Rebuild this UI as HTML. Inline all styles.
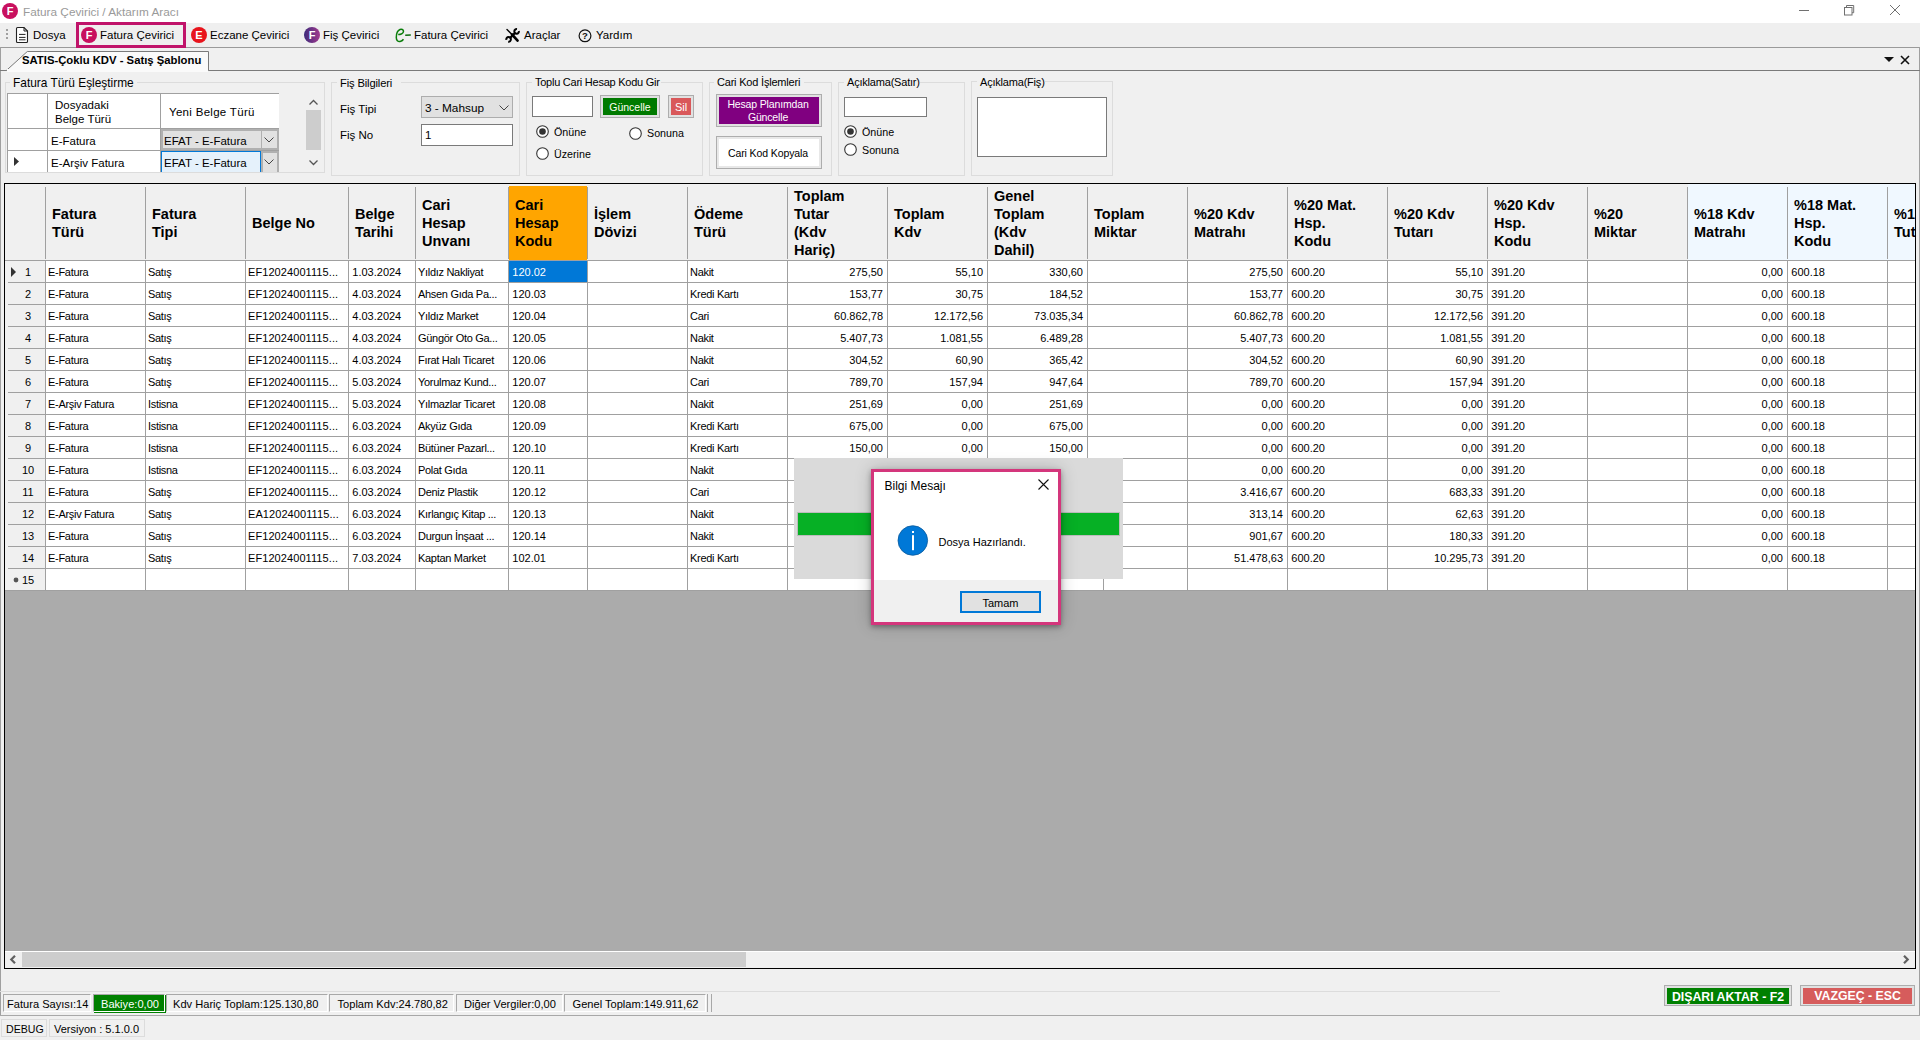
<!DOCTYPE html>
<html><head><meta charset="utf-8"><title>Fatura Çevirici</title>
<style>
html,body{margin:0;padding:0;}
body{width:1920px;height:1040px;overflow:hidden;position:relative;background:#f0f0f0;font-family:"Liberation Sans",sans-serif;}
.t{position:absolute;white-space:nowrap;}
.r{position:absolute;box-sizing:border-box;}
svg{position:absolute;overflow:visible;}
</style></head><body>

<div class="r" style="left:0px;top:0px;width:1920px;height:23px;background:#fff"></div>
<svg style="left:2px;top:3px" width="16" height="16" viewBox="0 0 16 16"><circle cx="8" cy="8" r="8" fill="#c8105f"/><text x="8" y="12.2" text-anchor="middle" font-family="Liberation Sans" font-weight="bold" font-size="11" fill="#fff">F</text></svg>
<div class="t" style="left:23px;top:7.01px;font-size:11.8px;line-height:11.8px;color:#9a9a9a;font-weight:normal;letter-spacing:0px;">Fatura Çevirici / Aktarım Aracı</div>
<div class="r" style="left:1799px;top:10px;width:10px;height:1px;background:#707070"></div>
<svg style="left:1844px;top:5px" width="12" height="12" viewBox="0 0 12 12"><rect x="0.5" y="2.5" width="7.5" height="7.5" fill="none" stroke="#707070"/><path d="M2.5 2.5V0.5H9.7V7.7H8" fill="none" stroke="#707070"/></svg>
<svg style="left:1890px;top:5px" width="10" height="10" viewBox="0 0 10 10"><path d="M0 0L10 10M10 0L0 10" stroke="#707070" stroke-width="1"/></svg>
<div class="r" style="left:0px;top:23px;width:1920px;height:24px;background:#efefef"></div>
<div class="r" style="left:6px;top:29px;width:2px;height:2px;background:#a0a0a0"></div>
<div class="r" style="left:6px;top:33px;width:2px;height:2px;background:#a0a0a0"></div>
<div class="r" style="left:6px;top:37px;width:2px;height:2px;background:#a0a0a0"></div>
<svg style="left:15px;top:26px" width="14" height="18" viewBox="0 0 14 18"><path d="M1.5 2.5Q1.5 1.5 2.5 1.5H9L12.5 5V15.5Q12.5 16.5 11.5 16.5H2.5Q1.5 16.5 1.5 15.5Z" fill="#fff" stroke="#222" stroke-width="1.1"/><path d="M9 1.5V5H12.5" fill="none" stroke="#222" stroke-width="1"/><path d="M4 8.4H10.5M4 11.4H10.5M4 13.8H10.5" stroke="#222" stroke-width="1"/></svg>
<div class="t" style="left:33px;top:30.27px;font-size:11.5px;line-height:11.5px;color:#000;font-weight:normal;letter-spacing:0px;">Dosya</div>
<div class="r" style="left:76px;top:22px;width:110px;height:26px;border:3px solid #c0146a;z-index:2"></div>
<svg style="left:81px;top:27px" width="16" height="16" viewBox="0 0 16 16"><circle cx="8" cy="8" r="8" fill="#c8105f"/><text x="8" y="12.2" text-anchor="middle" font-family="Liberation Sans" font-weight="bold" font-size="11" fill="#fff">F</text></svg>
<div class="t" style="left:100px;top:30.27px;font-size:11.5px;line-height:11.5px;color:#000;font-weight:normal;letter-spacing:0px;">Fatura Çevirici</div>
<svg style="left:191px;top:27px" width="16" height="16" viewBox="0 0 16 16"><circle cx="8" cy="8" r="8" fill="#e8141c"/><text x="8" y="12.2" text-anchor="middle" font-family="Liberation Sans" font-weight="bold" font-size="11" fill="#fff">E</text></svg>
<div class="t" style="left:210px;top:30.27px;font-size:11.5px;line-height:11.5px;color:#000;font-weight:normal;letter-spacing:0px;">Eczane Çevirici</div>
<svg style="left:304px;top:27px" width="16" height="16" viewBox="0 0 16 16"><defs><linearGradient id="gp" x1="0" y1="0" x2="1" y2="0"><stop offset="0" stop-color="#3c2a7a"/><stop offset="1" stop-color="#a33a8e"/></linearGradient></defs><circle cx="8" cy="8" r="8" fill="url(#gp)"/><text x="8" y="12.2" text-anchor="middle" font-family="Liberation Sans" font-weight="bold" font-size="11" fill="#fff">F</text></svg>
<div class="t" style="left:323px;top:30.27px;font-size:11.5px;line-height:11.5px;color:#000;font-weight:normal;letter-spacing:0px;">Fiş Çevirici</div>
<svg style="left:390px;top:24px" width="24" height="22" viewBox="0 0 24 22"><path d="M8.2 10.5C10.5 10.5 13.5 9.5 13.5 7.3C13.5 5.5 11.5 5 10 5.5C7.5 6.5 6.3 10 6.3 13.5C6.3 16.5 8 17.8 10 17.5C11.5 17.3 12.8 16.3 13.5 15.3" fill="none" stroke="#0a7d0a" stroke-width="1.5"/><path d="M15.2 11.3L20.8 11" stroke="#0a6a0a" stroke-width="1.5"/></svg>
<div class="t" style="left:414px;top:30.27px;font-size:11.5px;line-height:11.5px;color:#000;font-weight:normal;letter-spacing:0px;">Fatura Çevirici</div>
<svg style="left:505px;top:28px" width="15" height="15" viewBox="0 0 15 15"><path d="M2 1.5L7 6.5" stroke="#000" stroke-width="1.4" stroke-linecap="round"/><path d="M7 6.5L12.6 12.6" stroke="#000" stroke-width="2.6" stroke-linecap="round"/><path d="M4.8 10.2L10.2 4.8" stroke="#000" stroke-width="2.3"/><path d="M13.87 3.0A2.3 2.3 0 1 1 12.0 1.13" fill="none" stroke="#000" stroke-width="2"/><path d="M1.33 11.8A2.3 2.3 0 1 1 3.2 13.67" fill="none" stroke="#000" stroke-width="2"/></svg>
<div class="t" style="left:524px;top:30.27px;font-size:11.5px;line-height:11.5px;color:#000;font-weight:normal;letter-spacing:0px;">Araçlar</div>
<svg style="left:578px;top:29px" width="14" height="14" viewBox="0 0 14 14"><circle cx="7" cy="6.8" r="5.9" fill="none" stroke="#111" stroke-width="1.2"/><text x="7" y="10.3" text-anchor="middle" font-family="Liberation Sans" font-weight="bold" font-size="9.5" fill="#111">?</text></svg>
<div class="t" style="left:596px;top:30.27px;font-size:11.5px;line-height:11.5px;color:#000;font-weight:normal;letter-spacing:0px;">Yardım</div>
<div class="r" style="left:0px;top:47px;width:1920px;height:1px;background:#9a9a9a"></div>
<div class="r" style="left:0px;top:47px;width:1px;height:969px;background:#a0a0a0"></div>
<div class="r" style="left:1919px;top:47px;width:1px;height:969px;background:#a0a0a0"></div>
<div class="r" style="left:0px;top:70px;width:1920px;height:1px;background:#7a7a7a"></div>
<svg style="left:0px;top:48px" width="215" height="24" viewBox="0 0 215 24"><path d="M6.3 22.5L27.3 3.5H208.5V22.5" fill="#fafafa" stroke="#7a7a7a" stroke-width="1"/><rect x="7" y="21" width="201" height="3" fill="#fafafa"/></svg>
<div class="t" style="left:22px;top:55.43px;font-size:11.3px;line-height:11.3px;color:#000;font-weight:bold;letter-spacing:0px;">SATIS-Çoklu KDV - Satış Şablonu</div>
<svg style="left:1884px;top:57px" width="10" height="6" viewBox="0 0 10 6"><path d="M0 0H10L5 5Z" fill="#111"/></svg>
<svg style="left:1900px;top:55px" width="10" height="10" viewBox="0 0 10 10"><path d="M1 1L9 9M9 1L1 9" stroke="#111" stroke-width="1.6"/></svg>
<div class="r" style="left:5px;top:82px;width:320px;height:91px;border:1px solid #dcdcdc"></div>
<div class="r" style="left:10px;top:81px;width:127px;height:3px;background:#f0f0f0"></div>
<div class="t" style="left:13px;top:77.93px;font-size:11.9px;line-height:11.9px;color:#000;font-weight:normal;letter-spacing:0px;">Fatura Türü Eşleştirme</div>
<div class="r" style="left:7px;top:93px;width:272px;height:79px;background:#fff;border-top:1px solid #a0a0a0;border-left:1px solid #a0a0a0"></div>
<div class="r" style="left:47px;top:94px;width:1px;height:78px;background:#a0a0a0"></div>
<div class="r" style="left:160px;top:94px;width:1px;height:78px;background:#a0a0a0"></div>
<div class="r" style="left:8px;top:128px;width:271px;height:1px;background:#a0a0a0"></div>
<div class="r" style="left:8px;top:150px;width:271px;height:1px;background:#a0a0a0"></div>
<div class="t" style="left:55px;top:100.27px;font-size:11.5px;line-height:11.5px;color:#000;font-weight:normal;letter-spacing:0px;">Dosyadaki</div>
<div class="t" style="left:55px;top:114.27px;font-size:11.5px;line-height:11.5px;color:#000;font-weight:normal;letter-spacing:0px;">Belge Türü</div>
<div class="t" style="left:169px;top:107.27px;font-size:11.5px;line-height:11.5px;color:#000;font-weight:normal;letter-spacing:0.3px;">Yeni Belge Türü</div>
<div class="t" style="left:51px;top:136.27px;font-size:11.5px;line-height:11.5px;color:#000;font-weight:normal;letter-spacing:0px;">E-Fatura</div>
<div class="t" style="left:51px;top:158.27px;font-size:11.5px;line-height:11.5px;color:#000;font-weight:normal;letter-spacing:0px;">E-Arşiv Fatura</div>
<div class="r" style="left:161px;top:129px;width:118px;height:21px;background:#e1e1e1;border:2px solid #b0b0b0"></div>
<div class="r" style="left:261px;top:131px;width:1px;height:17px;background:#b0b0b0"></div>
<div class="t" style="left:164px;top:136.27px;font-size:11.5px;line-height:11.5px;color:#000;font-weight:normal;letter-spacing:0px;">EFAT - E-Fatura</div>
<svg style="left:264px;top:137px" width="10" height="6" viewBox="0 0 10 6"><path d="M0.5 0.5L5 5L9.5 0.5" fill="none" stroke="#444" stroke-width="1"/></svg>
<div class="r" style="left:161px;top:151px;width:100px;height:21px;background:#e5f1fb;border:1px solid #0078d7;border-bottom:none"></div>
<div class="r" style="left:261px;top:151px;width:18px;height:21px;background:#e1e1e1;border:2px solid #b0b0b0;border-bottom:none"></div>
<div class="t" style="left:164px;top:158.27px;font-size:11.5px;line-height:11.5px;color:#000;font-weight:normal;letter-spacing:0px;">EFAT - E-Fatura</div>
<svg style="left:264px;top:159px" width="10" height="6" viewBox="0 0 10 6"><path d="M0.5 0.5L5 5L9.5 0.5" fill="none" stroke="#444" stroke-width="1"/></svg>
<svg style="left:14px;top:157px" width="6" height="9" viewBox="0 0 6 9"><path d="M0 0L5 4.5L0 9Z" fill="#333"/></svg>
<div class="r" style="left:306px;top:94px;width:15px;height:78px;background:#f0f0f0"></div>
<div class="r" style="left:306px;top:110px;width:15px;height:40px;background:#cdcdcd"></div>
<svg style="left:309px;top:100px" width="9" height="5" viewBox="0 0 9 5"><path d="M0.5 4.5L4.5 0.5L8.5 4.5" fill="none" stroke="#555" stroke-width="1.3"/></svg>
<svg style="left:309px;top:160px" width="9" height="5" viewBox="0 0 9 5"><path d="M0.5 0.5L4.5 4.5L8.5 0.5" fill="none" stroke="#555" stroke-width="1.3"/></svg>
<div class="r" style="left:331px;top:82px;width:189px;height:94px;border:1px solid #dcdcdc"></div>
<div class="r" style="left:337px;top:81px;width:64px;height:3px;background:#f0f0f0"></div>
<div class="t" style="left:340px;top:77.52px;font-size:11.2px;line-height:11.2px;color:#000;font-weight:normal;letter-spacing:-0.15px;">Fiş Bilgileri</div>
<div class="t" style="left:340px;top:104.27px;font-size:11.5px;line-height:11.5px;color:#000;font-weight:normal;letter-spacing:0px;">Fiş Tipi</div>
<div class="t" style="left:340px;top:130.27px;font-size:11.5px;line-height:11.5px;color:#000;font-weight:normal;letter-spacing:0px;">Fiş No</div>
<div class="r" style="left:421px;top:96px;width:92px;height:22px;background:#e1e1e1;border:1px solid #adadad"></div>
<div class="t" style="left:425px;top:103.01px;font-size:11.8px;line-height:11.8px;color:#000;font-weight:normal;letter-spacing:0px;">3 - Mahsup</div>
<svg style="left:499px;top:105px" width="10" height="6" viewBox="0 0 10 6"><path d="M0.5 0.5L5 5L9.5 0.5" fill="none" stroke="#444" stroke-width="1"/></svg>
<div class="r" style="left:421px;top:124px;width:92px;height:22px;background:#fff;border:1px solid #7a7a7a"></div>
<div class="t" style="left:425px;top:130.27px;font-size:11.5px;line-height:11.5px;color:#000;font-weight:normal;letter-spacing:0px;">1</div>
<div class="r" style="left:526px;top:82px;width:177px;height:94px;border:1px solid #dcdcdc"></div>
<div class="r" style="left:532px;top:81px;width:129px;height:3px;background:#f0f0f0"></div>
<div class="t" style="left:535px;top:76.69px;font-size:11px;line-height:11px;color:#000;font-weight:normal;letter-spacing:-0.25px;">Toplu Cari Hesap Kodu Gir</div>
<div class="r" style="left:532px;top:96px;width:61px;height:21px;background:#fff;border:1px solid #7a7a7a"></div>
<div class="r" style="left:600px;top:95px;width:60px;height:23px;background:#e1e1e1;border:1px solid #adadad"></div>
<div class="r" style="left:603px;top:98px;width:54px;height:17px;background:#007a00"></div>
<div class="t" style="left:330px;width:600px;text-align:center;top:102.11px;font-size:10.5px;line-height:10.5px;color:#fffff4;font-weight:normal;letter-spacing:0px;">Güncelle</div>
<div class="r" style="left:668px;top:95px;width:26px;height:23px;background:#e1e1e1;border:1px solid #adadad"></div>
<div class="r" style="left:671px;top:98px;width:20px;height:17px;background:#d9585a"></div>
<div class="t" style="left:381px;width:600px;text-align:center;top:101.69px;font-size:11px;line-height:11px;color:#fff;font-weight:normal;letter-spacing:0px;">Sil</div>
<svg style="left:536px;top:125px" width="13" height="13" viewBox="0 0 13 13"><circle cx="6.5" cy="6.5" r="5.8" fill="#fff" stroke="#333" stroke-width="1.1"/><circle cx="6.5" cy="6.5" r="3.3" fill="#333"/></svg>
<div class="t" style="left:554px;top:126.94px;font-size:10.7px;line-height:10.7px;color:#000;font-weight:normal;letter-spacing:0px;">Önüne</div>
<svg style="left:629px;top:127px" width="13" height="13" viewBox="0 0 13 13"><circle cx="6.5" cy="6.5" r="5.8" fill="#fff" stroke="#333" stroke-width="1.1"/></svg>
<div class="t" style="left:647px;top:127.94px;font-size:10.7px;line-height:10.7px;color:#000;font-weight:normal;letter-spacing:0px;">Sonuna</div>
<svg style="left:536px;top:147px" width="13" height="13" viewBox="0 0 13 13"><circle cx="6.5" cy="6.5" r="5.8" fill="#fff" stroke="#333" stroke-width="1.1"/></svg>
<div class="t" style="left:554px;top:148.94px;font-size:10.7px;line-height:10.7px;color:#000;font-weight:normal;letter-spacing:0px;">Üzerine</div>
<div class="r" style="left:709px;top:82px;width:123px;height:94px;border:1px solid #dcdcdc"></div>
<div class="r" style="left:714px;top:81px;width:90px;height:3px;background:#f0f0f0"></div>
<div class="t" style="left:717px;top:76.69px;font-size:11px;line-height:11px;color:#000;font-weight:normal;letter-spacing:-0.2px;">Cari Kod İşlemleri</div>
<div class="r" style="left:716px;top:94px;width:106px;height:33px;background:#e1e1e1;border:1px solid #adadad"></div>
<div class="r" style="left:719px;top:97px;width:100px;height:27px;background:#800080"></div>
<div class="t" style="left:468px;width:600px;text-align:center;top:99.11px;font-size:10.5px;line-height:10.5px;color:#fff;font-weight:normal;letter-spacing:-0.15px;">Hesap Planımdan</div>
<div class="t" style="left:468px;width:600px;text-align:center;top:112.11px;font-size:10.5px;line-height:10.5px;color:#fff;font-weight:normal;letter-spacing:-0.15px;">Güncelle</div>
<div class="r" style="left:716px;top:136px;width:106px;height:33px;background:#fff;border:1px solid #adadad"></div>
<div class="r" style="left:717px;top:137px;width:104px;height:31px;border:2px solid #e8e8e8"></div>
<div class="t" style="left:468px;width:600px;text-align:center;top:148.11px;font-size:10.5px;line-height:10.5px;color:#000;font-weight:normal;letter-spacing:-0.1px;">Cari Kod Kopyala</div>
<div class="r" style="left:838px;top:82px;width:127px;height:94px;border:1px solid #dcdcdc"></div>
<div class="r" style="left:844px;top:81px;width:76px;height:3px;background:#f0f0f0"></div>
<div class="t" style="left:847px;top:76.69px;font-size:11px;line-height:11px;color:#000;font-weight:normal;letter-spacing:-0.2px;">Açıklama(Satır)</div>
<div class="r" style="left:844px;top:97px;width:83px;height:20px;background:#fff;border:1px solid #7a7a7a"></div>
<svg style="left:844px;top:125px" width="13" height="13" viewBox="0 0 13 13"><circle cx="6.5" cy="6.5" r="5.8" fill="#fff" stroke="#333" stroke-width="1.1"/><circle cx="6.5" cy="6.5" r="3.3" fill="#333"/></svg>
<div class="t" style="left:862px;top:126.94px;font-size:10.7px;line-height:10.7px;color:#000;font-weight:normal;letter-spacing:0px;">Önüne</div>
<svg style="left:844px;top:143px" width="13" height="13" viewBox="0 0 13 13"><circle cx="6.5" cy="6.5" r="5.8" fill="#fff" stroke="#333" stroke-width="1.1"/></svg>
<div class="t" style="left:862px;top:144.94px;font-size:10.7px;line-height:10.7px;color:#000;font-weight:normal;letter-spacing:0px;">Sonuna</div>
<div class="r" style="left:971px;top:81px;width:142px;height:95px;border:1px solid #dcdcdc"></div>
<div class="r" style="left:977px;top:80px;width:68px;height:3px;background:#f0f0f0"></div>
<div class="t" style="left:980px;top:76.69px;font-size:11px;line-height:11px;color:#000;font-weight:normal;letter-spacing:-0.2px;">Açıklama(Fiş)</div>
<div class="r" style="left:977px;top:97px;width:130px;height:60px;background:#fff;border:1px solid #7a7a7a"></div>
<div class="r" style="left:4px;top:183px;width:1912px;height:786px;border:1px solid #000;background:#ababab"></div>
<div class="r" style="left:5px;top:184px;width:1910px;height:76px;background:#f0f0f0"></div>
<div class="r" style="left:1688px;top:184px;width:227px;height:76px;background:#f0f8ff"></div>
<div class="r" style="left:509px;top:186px;width:78px;height:74px;background:#ffa500"></div>
<div class="r" style="left:45px;top:261px;width:1870px;height:329px;background:#fff"></div>
<div class="r" style="left:5px;top:261px;width:40px;height:329px;background:#f0f0f0"></div>
<div class="r" style="left:5px;top:260px;width:1910px;height:1px;background:#a0a0a0"></div>
<div class="r" style="left:45px;top:187px;width:1px;height:72px;background:#a0a0a0"></div>
<div class="r" style="left:45px;top:261px;width:1px;height:329px;background:#a0a0a0"></div>
<div class="r" style="left:145px;top:187px;width:1px;height:72px;background:#a0a0a0"></div>
<div class="r" style="left:145px;top:261px;width:1px;height:329px;background:#a0a0a0"></div>
<div class="r" style="left:245px;top:187px;width:1px;height:72px;background:#a0a0a0"></div>
<div class="r" style="left:245px;top:261px;width:1px;height:329px;background:#a0a0a0"></div>
<div class="r" style="left:348px;top:187px;width:1px;height:72px;background:#a0a0a0"></div>
<div class="r" style="left:348px;top:261px;width:1px;height:329px;background:#a0a0a0"></div>
<div class="r" style="left:415px;top:187px;width:1px;height:72px;background:#a0a0a0"></div>
<div class="r" style="left:415px;top:261px;width:1px;height:329px;background:#a0a0a0"></div>
<div class="r" style="left:508px;top:187px;width:1px;height:72px;background:#a0a0a0"></div>
<div class="r" style="left:508px;top:261px;width:1px;height:329px;background:#a0a0a0"></div>
<div class="r" style="left:587px;top:187px;width:1px;height:72px;background:#a0a0a0"></div>
<div class="r" style="left:587px;top:261px;width:1px;height:329px;background:#a0a0a0"></div>
<div class="r" style="left:687px;top:187px;width:1px;height:72px;background:#a0a0a0"></div>
<div class="r" style="left:687px;top:261px;width:1px;height:329px;background:#a0a0a0"></div>
<div class="r" style="left:787px;top:187px;width:1px;height:72px;background:#a0a0a0"></div>
<div class="r" style="left:787px;top:261px;width:1px;height:329px;background:#a0a0a0"></div>
<div class="r" style="left:887px;top:187px;width:1px;height:72px;background:#a0a0a0"></div>
<div class="r" style="left:887px;top:261px;width:1px;height:329px;background:#a0a0a0"></div>
<div class="r" style="left:987px;top:187px;width:1px;height:72px;background:#a0a0a0"></div>
<div class="r" style="left:987px;top:261px;width:1px;height:329px;background:#a0a0a0"></div>
<div class="r" style="left:1087px;top:187px;width:1px;height:72px;background:#a0a0a0"></div>
<div class="r" style="left:1087px;top:261px;width:1px;height:329px;background:#a0a0a0"></div>
<div class="r" style="left:1187px;top:187px;width:1px;height:72px;background:#a0a0a0"></div>
<div class="r" style="left:1187px;top:261px;width:1px;height:329px;background:#a0a0a0"></div>
<div class="r" style="left:1287px;top:187px;width:1px;height:72px;background:#a0a0a0"></div>
<div class="r" style="left:1287px;top:261px;width:1px;height:329px;background:#a0a0a0"></div>
<div class="r" style="left:1387px;top:187px;width:1px;height:72px;background:#a0a0a0"></div>
<div class="r" style="left:1387px;top:261px;width:1px;height:329px;background:#a0a0a0"></div>
<div class="r" style="left:1487px;top:187px;width:1px;height:72px;background:#a0a0a0"></div>
<div class="r" style="left:1487px;top:261px;width:1px;height:329px;background:#a0a0a0"></div>
<div class="r" style="left:1587px;top:187px;width:1px;height:72px;background:#a0a0a0"></div>
<div class="r" style="left:1587px;top:261px;width:1px;height:329px;background:#a0a0a0"></div>
<div class="r" style="left:1687px;top:187px;width:1px;height:72px;background:#a0a0a0"></div>
<div class="r" style="left:1687px;top:261px;width:1px;height:329px;background:#a0a0a0"></div>
<div class="r" style="left:1787px;top:187px;width:1px;height:72px;background:#a0a0a0"></div>
<div class="r" style="left:1787px;top:261px;width:1px;height:329px;background:#a0a0a0"></div>
<div class="r" style="left:1887px;top:187px;width:1px;height:72px;background:#a0a0a0"></div>
<div class="r" style="left:1887px;top:261px;width:1px;height:329px;background:#a0a0a0"></div>
<div class="r" style="left:45px;top:282px;width:1870px;height:1px;background:#a0a0a0"></div>
<div class="r" style="left:8px;top:282px;width:37px;height:1px;background:#a0a0a0"></div>
<div class="r" style="left:45px;top:304px;width:1870px;height:1px;background:#a0a0a0"></div>
<div class="r" style="left:8px;top:304px;width:37px;height:1px;background:#a0a0a0"></div>
<div class="r" style="left:45px;top:326px;width:1870px;height:1px;background:#a0a0a0"></div>
<div class="r" style="left:8px;top:326px;width:37px;height:1px;background:#a0a0a0"></div>
<div class="r" style="left:45px;top:348px;width:1870px;height:1px;background:#a0a0a0"></div>
<div class="r" style="left:8px;top:348px;width:37px;height:1px;background:#a0a0a0"></div>
<div class="r" style="left:45px;top:370px;width:1870px;height:1px;background:#a0a0a0"></div>
<div class="r" style="left:8px;top:370px;width:37px;height:1px;background:#a0a0a0"></div>
<div class="r" style="left:45px;top:392px;width:1870px;height:1px;background:#a0a0a0"></div>
<div class="r" style="left:8px;top:392px;width:37px;height:1px;background:#a0a0a0"></div>
<div class="r" style="left:45px;top:414px;width:1870px;height:1px;background:#a0a0a0"></div>
<div class="r" style="left:8px;top:414px;width:37px;height:1px;background:#a0a0a0"></div>
<div class="r" style="left:45px;top:436px;width:1870px;height:1px;background:#a0a0a0"></div>
<div class="r" style="left:8px;top:436px;width:37px;height:1px;background:#a0a0a0"></div>
<div class="r" style="left:45px;top:458px;width:1870px;height:1px;background:#a0a0a0"></div>
<div class="r" style="left:8px;top:458px;width:37px;height:1px;background:#a0a0a0"></div>
<div class="r" style="left:45px;top:480px;width:1870px;height:1px;background:#a0a0a0"></div>
<div class="r" style="left:8px;top:480px;width:37px;height:1px;background:#a0a0a0"></div>
<div class="r" style="left:45px;top:502px;width:1870px;height:1px;background:#a0a0a0"></div>
<div class="r" style="left:8px;top:502px;width:37px;height:1px;background:#a0a0a0"></div>
<div class="r" style="left:45px;top:524px;width:1870px;height:1px;background:#a0a0a0"></div>
<div class="r" style="left:8px;top:524px;width:37px;height:1px;background:#a0a0a0"></div>
<div class="r" style="left:45px;top:546px;width:1870px;height:1px;background:#a0a0a0"></div>
<div class="r" style="left:8px;top:546px;width:37px;height:1px;background:#a0a0a0"></div>
<div class="r" style="left:45px;top:568px;width:1870px;height:1px;background:#a0a0a0"></div>
<div class="r" style="left:8px;top:568px;width:37px;height:1px;background:#a0a0a0"></div>
<div class="r" style="left:45px;top:590px;width:1870px;height:1px;background:#a0a0a0"></div>
<div class="r" style="left:8px;top:590px;width:37px;height:1px;background:#a0a0a0"></div>
<div style="position:absolute;left:5px;top:184px;width:1910px;height:76px;overflow:hidden">
<div class="t" style="left:47px;top:22.73px;font-size:14.5px;line-height:14.5px;color:#000;font-weight:bold;letter-spacing:0px;">Fatura</div>
<div class="t" style="left:47px;top:40.73px;font-size:14.5px;line-height:14.5px;color:#000;font-weight:bold;letter-spacing:0px;">Türü</div>
<div class="t" style="left:147px;top:22.73px;font-size:14.5px;line-height:14.5px;color:#000;font-weight:bold;letter-spacing:0px;">Fatura</div>
<div class="t" style="left:147px;top:40.73px;font-size:14.5px;line-height:14.5px;color:#000;font-weight:bold;letter-spacing:0px;">Tipi</div>
<div class="t" style="left:247px;top:31.73px;font-size:14.5px;line-height:14.5px;color:#000;font-weight:bold;letter-spacing:0px;">Belge No</div>
<div class="t" style="left:350px;top:22.73px;font-size:14.5px;line-height:14.5px;color:#000;font-weight:bold;letter-spacing:0px;">Belge</div>
<div class="t" style="left:350px;top:40.73px;font-size:14.5px;line-height:14.5px;color:#000;font-weight:bold;letter-spacing:0px;">Tarihi</div>
<div class="t" style="left:417px;top:13.73px;font-size:14.5px;line-height:14.5px;color:#000;font-weight:bold;letter-spacing:0px;">Cari</div>
<div class="t" style="left:417px;top:31.73px;font-size:14.5px;line-height:14.5px;color:#000;font-weight:bold;letter-spacing:0px;">Hesap</div>
<div class="t" style="left:417px;top:49.73px;font-size:14.5px;line-height:14.5px;color:#000;font-weight:bold;letter-spacing:0px;">Unvanı</div>
<div class="t" style="left:510px;top:13.73px;font-size:14.5px;line-height:14.5px;color:#000;font-weight:bold;letter-spacing:0px;">Cari</div>
<div class="t" style="left:510px;top:31.73px;font-size:14.5px;line-height:14.5px;color:#000;font-weight:bold;letter-spacing:0px;">Hesap</div>
<div class="t" style="left:510px;top:49.73px;font-size:14.5px;line-height:14.5px;color:#000;font-weight:bold;letter-spacing:0px;">Kodu</div>
<div class="t" style="left:589px;top:22.73px;font-size:14.5px;line-height:14.5px;color:#000;font-weight:bold;letter-spacing:0px;">İşlem</div>
<div class="t" style="left:589px;top:40.73px;font-size:14.5px;line-height:14.5px;color:#000;font-weight:bold;letter-spacing:0px;">Dövizi</div>
<div class="t" style="left:689px;top:22.73px;font-size:14.5px;line-height:14.5px;color:#000;font-weight:bold;letter-spacing:0px;">Ödeme</div>
<div class="t" style="left:689px;top:40.73px;font-size:14.5px;line-height:14.5px;color:#000;font-weight:bold;letter-spacing:0px;">Türü</div>
<div class="t" style="left:789px;top:4.73px;font-size:14.5px;line-height:14.5px;color:#000;font-weight:bold;letter-spacing:0px;">Toplam</div>
<div class="t" style="left:789px;top:22.73px;font-size:14.5px;line-height:14.5px;color:#000;font-weight:bold;letter-spacing:0px;">Tutar</div>
<div class="t" style="left:789px;top:40.73px;font-size:14.5px;line-height:14.5px;color:#000;font-weight:bold;letter-spacing:0px;">(Kdv</div>
<div class="t" style="left:789px;top:58.73px;font-size:14.5px;line-height:14.5px;color:#000;font-weight:bold;letter-spacing:0px;">Hariç)</div>
<div class="t" style="left:889px;top:22.73px;font-size:14.5px;line-height:14.5px;color:#000;font-weight:bold;letter-spacing:0px;">Toplam</div>
<div class="t" style="left:889px;top:40.73px;font-size:14.5px;line-height:14.5px;color:#000;font-weight:bold;letter-spacing:0px;">Kdv</div>
<div class="t" style="left:989px;top:4.73px;font-size:14.5px;line-height:14.5px;color:#000;font-weight:bold;letter-spacing:0px;">Genel</div>
<div class="t" style="left:989px;top:22.73px;font-size:14.5px;line-height:14.5px;color:#000;font-weight:bold;letter-spacing:0px;">Toplam</div>
<div class="t" style="left:989px;top:40.73px;font-size:14.5px;line-height:14.5px;color:#000;font-weight:bold;letter-spacing:0px;">(Kdv</div>
<div class="t" style="left:989px;top:58.73px;font-size:14.5px;line-height:14.5px;color:#000;font-weight:bold;letter-spacing:0px;">Dahil)</div>
<div class="t" style="left:1089px;top:22.73px;font-size:14.5px;line-height:14.5px;color:#000;font-weight:bold;letter-spacing:0px;">Toplam</div>
<div class="t" style="left:1089px;top:40.73px;font-size:14.5px;line-height:14.5px;color:#000;font-weight:bold;letter-spacing:0px;">Miktar</div>
<div class="t" style="left:1189px;top:22.73px;font-size:14.5px;line-height:14.5px;color:#000;font-weight:bold;letter-spacing:0px;">%20 Kdv</div>
<div class="t" style="left:1189px;top:40.73px;font-size:14.5px;line-height:14.5px;color:#000;font-weight:bold;letter-spacing:0px;">Matrahı</div>
<div class="t" style="left:1289px;top:13.73px;font-size:14.5px;line-height:14.5px;color:#000;font-weight:bold;letter-spacing:0px;">%20 Mat.</div>
<div class="t" style="left:1289px;top:31.73px;font-size:14.5px;line-height:14.5px;color:#000;font-weight:bold;letter-spacing:0px;">Hsp.</div>
<div class="t" style="left:1289px;top:49.73px;font-size:14.5px;line-height:14.5px;color:#000;font-weight:bold;letter-spacing:0px;">Kodu</div>
<div class="t" style="left:1389px;top:22.73px;font-size:14.5px;line-height:14.5px;color:#000;font-weight:bold;letter-spacing:0px;">%20 Kdv</div>
<div class="t" style="left:1389px;top:40.73px;font-size:14.5px;line-height:14.5px;color:#000;font-weight:bold;letter-spacing:0px;">Tutarı</div>
<div class="t" style="left:1489px;top:13.73px;font-size:14.5px;line-height:14.5px;color:#000;font-weight:bold;letter-spacing:0px;">%20 Kdv</div>
<div class="t" style="left:1489px;top:31.73px;font-size:14.5px;line-height:14.5px;color:#000;font-weight:bold;letter-spacing:0px;">Hsp.</div>
<div class="t" style="left:1489px;top:49.73px;font-size:14.5px;line-height:14.5px;color:#000;font-weight:bold;letter-spacing:0px;">Kodu</div>
<div class="t" style="left:1589px;top:22.73px;font-size:14.5px;line-height:14.5px;color:#000;font-weight:bold;letter-spacing:0px;">%20</div>
<div class="t" style="left:1589px;top:40.73px;font-size:14.5px;line-height:14.5px;color:#000;font-weight:bold;letter-spacing:0px;">Miktar</div>
<div class="t" style="left:1689px;top:22.73px;font-size:14.5px;line-height:14.5px;color:#000;font-weight:bold;letter-spacing:0px;">%18 Kdv</div>
<div class="t" style="left:1689px;top:40.73px;font-size:14.5px;line-height:14.5px;color:#000;font-weight:bold;letter-spacing:0px;">Matrahı</div>
<div class="t" style="left:1789px;top:13.73px;font-size:14.5px;line-height:14.5px;color:#000;font-weight:bold;letter-spacing:0px;">%18 Mat.</div>
<div class="t" style="left:1789px;top:31.73px;font-size:14.5px;line-height:14.5px;color:#000;font-weight:bold;letter-spacing:0px;">Hsp.</div>
<div class="t" style="left:1789px;top:49.73px;font-size:14.5px;line-height:14.5px;color:#000;font-weight:bold;letter-spacing:0px;">Kodu</div>
<div class="t" style="left:1889px;top:22.73px;font-size:14.5px;line-height:14.5px;color:#000;font-weight:bold;letter-spacing:0px;">%18 Kdv</div>
<div class="t" style="left:1889px;top:40.73px;font-size:14.5px;line-height:14.5px;color:#000;font-weight:bold;letter-spacing:0px;">Tutarı</div>
</div>
<div class="r" style="left:509px;top:261px;width:78px;height:21px;background:#0078d7"></div>
<div class="t" style="left:-272px;width:600px;text-align:center;top:266.69px;font-size:11px;line-height:11px;color:#000;font-weight:normal;letter-spacing:0px;">1</div>
<div class="t" style="left:48px;top:266.69px;font-size:11px;line-height:11px;color:#000;font-weight:normal;letter-spacing:-0.3px;">E-Fatura</div>
<div class="t" style="left:148px;top:266.69px;font-size:11px;line-height:11px;color:#000;font-weight:normal;letter-spacing:-0.3px;">Satış</div>
<div class="t" style="left:248px;top:266.69px;font-size:11px;line-height:11px;color:#000;font-weight:normal;letter-spacing:0.08px;">EF12024001115...</div>
<div class="t" style="left:352.3px;top:266.69px;font-size:11px;line-height:11px;color:#000;font-weight:normal;letter-spacing:0px;">1.03.2024</div>
<div class="t" style="left:418px;top:266.69px;font-size:11px;line-height:11px;color:#000;font-weight:normal;letter-spacing:-0.3px;">Yıldız Nakliyat</div>
<div class="t" style="left:512.3px;top:266.69px;font-size:11px;line-height:11px;color:#fff;font-weight:normal;letter-spacing:0px;">120.02</div>
<div class="t" style="left:690px;top:266.69px;font-size:11px;line-height:11px;color:#000;font-weight:normal;letter-spacing:-0.3px;">Nakit</div>
<div class="t" style="right:1037px;top:266.69px;font-size:11px;line-height:11px;color:#000;font-weight:normal;letter-spacing:0px;">275,50</div>
<div class="t" style="right:937px;top:266.69px;font-size:11px;line-height:11px;color:#000;font-weight:normal;letter-spacing:0px;">55,10</div>
<div class="t" style="right:837px;top:266.69px;font-size:11px;line-height:11px;color:#000;font-weight:normal;letter-spacing:0px;">330,60</div>
<div class="t" style="right:637px;top:266.69px;font-size:11px;line-height:11px;color:#000;font-weight:normal;letter-spacing:0px;">275,50</div>
<div class="t" style="left:1291.3px;top:266.69px;font-size:11px;line-height:11px;color:#000;font-weight:normal;letter-spacing:0px;">600.20</div>
<div class="t" style="right:437px;top:266.69px;font-size:11px;line-height:11px;color:#000;font-weight:normal;letter-spacing:0px;">55,10</div>
<div class="t" style="left:1491.3px;top:266.69px;font-size:11px;line-height:11px;color:#000;font-weight:normal;letter-spacing:0px;">391.20</div>
<div class="t" style="right:137px;top:266.69px;font-size:11px;line-height:11px;color:#000;font-weight:normal;letter-spacing:0px;">0,00</div>
<div class="t" style="left:1791.3px;top:266.69px;font-size:11px;line-height:11px;color:#000;font-weight:normal;letter-spacing:0px;">600.18</div>
<div class="t" style="left:-272px;width:600px;text-align:center;top:288.69px;font-size:11px;line-height:11px;color:#000;font-weight:normal;letter-spacing:0px;">2</div>
<div class="t" style="left:48px;top:288.69px;font-size:11px;line-height:11px;color:#000;font-weight:normal;letter-spacing:-0.3px;">E-Fatura</div>
<div class="t" style="left:148px;top:288.69px;font-size:11px;line-height:11px;color:#000;font-weight:normal;letter-spacing:-0.3px;">Satış</div>
<div class="t" style="left:248px;top:288.69px;font-size:11px;line-height:11px;color:#000;font-weight:normal;letter-spacing:0.08px;">EF12024001115...</div>
<div class="t" style="left:352.3px;top:288.69px;font-size:11px;line-height:11px;color:#000;font-weight:normal;letter-spacing:0px;">4.03.2024</div>
<div class="t" style="left:418px;top:288.69px;font-size:11px;line-height:11px;color:#000;font-weight:normal;letter-spacing:-0.3px;">Ahsen Gıda Pa...</div>
<div class="t" style="left:512.3px;top:288.69px;font-size:11px;line-height:11px;color:#000;font-weight:normal;letter-spacing:0px;">120.03</div>
<div class="t" style="left:690px;top:288.69px;font-size:11px;line-height:11px;color:#000;font-weight:normal;letter-spacing:-0.3px;">Kredi Kartı</div>
<div class="t" style="right:1037px;top:288.69px;font-size:11px;line-height:11px;color:#000;font-weight:normal;letter-spacing:0px;">153,77</div>
<div class="t" style="right:937px;top:288.69px;font-size:11px;line-height:11px;color:#000;font-weight:normal;letter-spacing:0px;">30,75</div>
<div class="t" style="right:837px;top:288.69px;font-size:11px;line-height:11px;color:#000;font-weight:normal;letter-spacing:0px;">184,52</div>
<div class="t" style="right:637px;top:288.69px;font-size:11px;line-height:11px;color:#000;font-weight:normal;letter-spacing:0px;">153,77</div>
<div class="t" style="left:1291.3px;top:288.69px;font-size:11px;line-height:11px;color:#000;font-weight:normal;letter-spacing:0px;">600.20</div>
<div class="t" style="right:437px;top:288.69px;font-size:11px;line-height:11px;color:#000;font-weight:normal;letter-spacing:0px;">30,75</div>
<div class="t" style="left:1491.3px;top:288.69px;font-size:11px;line-height:11px;color:#000;font-weight:normal;letter-spacing:0px;">391.20</div>
<div class="t" style="right:137px;top:288.69px;font-size:11px;line-height:11px;color:#000;font-weight:normal;letter-spacing:0px;">0,00</div>
<div class="t" style="left:1791.3px;top:288.69px;font-size:11px;line-height:11px;color:#000;font-weight:normal;letter-spacing:0px;">600.18</div>
<div class="t" style="left:-272px;width:600px;text-align:center;top:310.69px;font-size:11px;line-height:11px;color:#000;font-weight:normal;letter-spacing:0px;">3</div>
<div class="t" style="left:48px;top:310.69px;font-size:11px;line-height:11px;color:#000;font-weight:normal;letter-spacing:-0.3px;">E-Fatura</div>
<div class="t" style="left:148px;top:310.69px;font-size:11px;line-height:11px;color:#000;font-weight:normal;letter-spacing:-0.3px;">Satış</div>
<div class="t" style="left:248px;top:310.69px;font-size:11px;line-height:11px;color:#000;font-weight:normal;letter-spacing:0.08px;">EF12024001115...</div>
<div class="t" style="left:352.3px;top:310.69px;font-size:11px;line-height:11px;color:#000;font-weight:normal;letter-spacing:0px;">4.03.2024</div>
<div class="t" style="left:418px;top:310.69px;font-size:11px;line-height:11px;color:#000;font-weight:normal;letter-spacing:-0.3px;">Yıldız Market</div>
<div class="t" style="left:512.3px;top:310.69px;font-size:11px;line-height:11px;color:#000;font-weight:normal;letter-spacing:0px;">120.04</div>
<div class="t" style="left:690px;top:310.69px;font-size:11px;line-height:11px;color:#000;font-weight:normal;letter-spacing:-0.3px;">Cari</div>
<div class="t" style="right:1037px;top:310.69px;font-size:11px;line-height:11px;color:#000;font-weight:normal;letter-spacing:0px;">60.862,78</div>
<div class="t" style="right:937px;top:310.69px;font-size:11px;line-height:11px;color:#000;font-weight:normal;letter-spacing:0px;">12.172,56</div>
<div class="t" style="right:837px;top:310.69px;font-size:11px;line-height:11px;color:#000;font-weight:normal;letter-spacing:0px;">73.035,34</div>
<div class="t" style="right:637px;top:310.69px;font-size:11px;line-height:11px;color:#000;font-weight:normal;letter-spacing:0px;">60.862,78</div>
<div class="t" style="left:1291.3px;top:310.69px;font-size:11px;line-height:11px;color:#000;font-weight:normal;letter-spacing:0px;">600.20</div>
<div class="t" style="right:437px;top:310.69px;font-size:11px;line-height:11px;color:#000;font-weight:normal;letter-spacing:0px;">12.172,56</div>
<div class="t" style="left:1491.3px;top:310.69px;font-size:11px;line-height:11px;color:#000;font-weight:normal;letter-spacing:0px;">391.20</div>
<div class="t" style="right:137px;top:310.69px;font-size:11px;line-height:11px;color:#000;font-weight:normal;letter-spacing:0px;">0,00</div>
<div class="t" style="left:1791.3px;top:310.69px;font-size:11px;line-height:11px;color:#000;font-weight:normal;letter-spacing:0px;">600.18</div>
<div class="t" style="left:-272px;width:600px;text-align:center;top:332.69px;font-size:11px;line-height:11px;color:#000;font-weight:normal;letter-spacing:0px;">4</div>
<div class="t" style="left:48px;top:332.69px;font-size:11px;line-height:11px;color:#000;font-weight:normal;letter-spacing:-0.3px;">E-Fatura</div>
<div class="t" style="left:148px;top:332.69px;font-size:11px;line-height:11px;color:#000;font-weight:normal;letter-spacing:-0.3px;">Satış</div>
<div class="t" style="left:248px;top:332.69px;font-size:11px;line-height:11px;color:#000;font-weight:normal;letter-spacing:0.08px;">EF12024001115...</div>
<div class="t" style="left:352.3px;top:332.69px;font-size:11px;line-height:11px;color:#000;font-weight:normal;letter-spacing:0px;">4.03.2024</div>
<div class="t" style="left:418px;top:332.69px;font-size:11px;line-height:11px;color:#000;font-weight:normal;letter-spacing:-0.3px;">Güngör Oto Ga...</div>
<div class="t" style="left:512.3px;top:332.69px;font-size:11px;line-height:11px;color:#000;font-weight:normal;letter-spacing:0px;">120.05</div>
<div class="t" style="left:690px;top:332.69px;font-size:11px;line-height:11px;color:#000;font-weight:normal;letter-spacing:-0.3px;">Nakit</div>
<div class="t" style="right:1037px;top:332.69px;font-size:11px;line-height:11px;color:#000;font-weight:normal;letter-spacing:0px;">5.407,73</div>
<div class="t" style="right:937px;top:332.69px;font-size:11px;line-height:11px;color:#000;font-weight:normal;letter-spacing:0px;">1.081,55</div>
<div class="t" style="right:837px;top:332.69px;font-size:11px;line-height:11px;color:#000;font-weight:normal;letter-spacing:0px;">6.489,28</div>
<div class="t" style="right:637px;top:332.69px;font-size:11px;line-height:11px;color:#000;font-weight:normal;letter-spacing:0px;">5.407,73</div>
<div class="t" style="left:1291.3px;top:332.69px;font-size:11px;line-height:11px;color:#000;font-weight:normal;letter-spacing:0px;">600.20</div>
<div class="t" style="right:437px;top:332.69px;font-size:11px;line-height:11px;color:#000;font-weight:normal;letter-spacing:0px;">1.081,55</div>
<div class="t" style="left:1491.3px;top:332.69px;font-size:11px;line-height:11px;color:#000;font-weight:normal;letter-spacing:0px;">391.20</div>
<div class="t" style="right:137px;top:332.69px;font-size:11px;line-height:11px;color:#000;font-weight:normal;letter-spacing:0px;">0,00</div>
<div class="t" style="left:1791.3px;top:332.69px;font-size:11px;line-height:11px;color:#000;font-weight:normal;letter-spacing:0px;">600.18</div>
<div class="t" style="left:-272px;width:600px;text-align:center;top:354.69px;font-size:11px;line-height:11px;color:#000;font-weight:normal;letter-spacing:0px;">5</div>
<div class="t" style="left:48px;top:354.69px;font-size:11px;line-height:11px;color:#000;font-weight:normal;letter-spacing:-0.3px;">E-Fatura</div>
<div class="t" style="left:148px;top:354.69px;font-size:11px;line-height:11px;color:#000;font-weight:normal;letter-spacing:-0.3px;">Satış</div>
<div class="t" style="left:248px;top:354.69px;font-size:11px;line-height:11px;color:#000;font-weight:normal;letter-spacing:0.08px;">EF12024001115...</div>
<div class="t" style="left:352.3px;top:354.69px;font-size:11px;line-height:11px;color:#000;font-weight:normal;letter-spacing:0px;">4.03.2024</div>
<div class="t" style="left:418px;top:354.69px;font-size:11px;line-height:11px;color:#000;font-weight:normal;letter-spacing:-0.3px;">Fırat Halı Ticaret</div>
<div class="t" style="left:512.3px;top:354.69px;font-size:11px;line-height:11px;color:#000;font-weight:normal;letter-spacing:0px;">120.06</div>
<div class="t" style="left:690px;top:354.69px;font-size:11px;line-height:11px;color:#000;font-weight:normal;letter-spacing:-0.3px;">Nakit</div>
<div class="t" style="right:1037px;top:354.69px;font-size:11px;line-height:11px;color:#000;font-weight:normal;letter-spacing:0px;">304,52</div>
<div class="t" style="right:937px;top:354.69px;font-size:11px;line-height:11px;color:#000;font-weight:normal;letter-spacing:0px;">60,90</div>
<div class="t" style="right:837px;top:354.69px;font-size:11px;line-height:11px;color:#000;font-weight:normal;letter-spacing:0px;">365,42</div>
<div class="t" style="right:637px;top:354.69px;font-size:11px;line-height:11px;color:#000;font-weight:normal;letter-spacing:0px;">304,52</div>
<div class="t" style="left:1291.3px;top:354.69px;font-size:11px;line-height:11px;color:#000;font-weight:normal;letter-spacing:0px;">600.20</div>
<div class="t" style="right:437px;top:354.69px;font-size:11px;line-height:11px;color:#000;font-weight:normal;letter-spacing:0px;">60,90</div>
<div class="t" style="left:1491.3px;top:354.69px;font-size:11px;line-height:11px;color:#000;font-weight:normal;letter-spacing:0px;">391.20</div>
<div class="t" style="right:137px;top:354.69px;font-size:11px;line-height:11px;color:#000;font-weight:normal;letter-spacing:0px;">0,00</div>
<div class="t" style="left:1791.3px;top:354.69px;font-size:11px;line-height:11px;color:#000;font-weight:normal;letter-spacing:0px;">600.18</div>
<div class="t" style="left:-272px;width:600px;text-align:center;top:376.69px;font-size:11px;line-height:11px;color:#000;font-weight:normal;letter-spacing:0px;">6</div>
<div class="t" style="left:48px;top:376.69px;font-size:11px;line-height:11px;color:#000;font-weight:normal;letter-spacing:-0.3px;">E-Fatura</div>
<div class="t" style="left:148px;top:376.69px;font-size:11px;line-height:11px;color:#000;font-weight:normal;letter-spacing:-0.3px;">Satış</div>
<div class="t" style="left:248px;top:376.69px;font-size:11px;line-height:11px;color:#000;font-weight:normal;letter-spacing:0.08px;">EF12024001115...</div>
<div class="t" style="left:352.3px;top:376.69px;font-size:11px;line-height:11px;color:#000;font-weight:normal;letter-spacing:0px;">5.03.2024</div>
<div class="t" style="left:418px;top:376.69px;font-size:11px;line-height:11px;color:#000;font-weight:normal;letter-spacing:-0.3px;">Yorulmaz Kund...</div>
<div class="t" style="left:512.3px;top:376.69px;font-size:11px;line-height:11px;color:#000;font-weight:normal;letter-spacing:0px;">120.07</div>
<div class="t" style="left:690px;top:376.69px;font-size:11px;line-height:11px;color:#000;font-weight:normal;letter-spacing:-0.3px;">Cari</div>
<div class="t" style="right:1037px;top:376.69px;font-size:11px;line-height:11px;color:#000;font-weight:normal;letter-spacing:0px;">789,70</div>
<div class="t" style="right:937px;top:376.69px;font-size:11px;line-height:11px;color:#000;font-weight:normal;letter-spacing:0px;">157,94</div>
<div class="t" style="right:837px;top:376.69px;font-size:11px;line-height:11px;color:#000;font-weight:normal;letter-spacing:0px;">947,64</div>
<div class="t" style="right:637px;top:376.69px;font-size:11px;line-height:11px;color:#000;font-weight:normal;letter-spacing:0px;">789,70</div>
<div class="t" style="left:1291.3px;top:376.69px;font-size:11px;line-height:11px;color:#000;font-weight:normal;letter-spacing:0px;">600.20</div>
<div class="t" style="right:437px;top:376.69px;font-size:11px;line-height:11px;color:#000;font-weight:normal;letter-spacing:0px;">157,94</div>
<div class="t" style="left:1491.3px;top:376.69px;font-size:11px;line-height:11px;color:#000;font-weight:normal;letter-spacing:0px;">391.20</div>
<div class="t" style="right:137px;top:376.69px;font-size:11px;line-height:11px;color:#000;font-weight:normal;letter-spacing:0px;">0,00</div>
<div class="t" style="left:1791.3px;top:376.69px;font-size:11px;line-height:11px;color:#000;font-weight:normal;letter-spacing:0px;">600.18</div>
<div class="t" style="left:-272px;width:600px;text-align:center;top:398.69px;font-size:11px;line-height:11px;color:#000;font-weight:normal;letter-spacing:0px;">7</div>
<div class="t" style="left:48px;top:398.69px;font-size:11px;line-height:11px;color:#000;font-weight:normal;letter-spacing:-0.3px;">E-Arşiv Fatura</div>
<div class="t" style="left:148px;top:398.69px;font-size:11px;line-height:11px;color:#000;font-weight:normal;letter-spacing:-0.3px;">Istisna</div>
<div class="t" style="left:248px;top:398.69px;font-size:11px;line-height:11px;color:#000;font-weight:normal;letter-spacing:0.08px;">EF12024001115...</div>
<div class="t" style="left:352.3px;top:398.69px;font-size:11px;line-height:11px;color:#000;font-weight:normal;letter-spacing:0px;">5.03.2024</div>
<div class="t" style="left:418px;top:398.69px;font-size:11px;line-height:11px;color:#000;font-weight:normal;letter-spacing:-0.3px;">Yılmazlar Ticaret</div>
<div class="t" style="left:512.3px;top:398.69px;font-size:11px;line-height:11px;color:#000;font-weight:normal;letter-spacing:0px;">120.08</div>
<div class="t" style="left:690px;top:398.69px;font-size:11px;line-height:11px;color:#000;font-weight:normal;letter-spacing:-0.3px;">Nakit</div>
<div class="t" style="right:1037px;top:398.69px;font-size:11px;line-height:11px;color:#000;font-weight:normal;letter-spacing:0px;">251,69</div>
<div class="t" style="right:937px;top:398.69px;font-size:11px;line-height:11px;color:#000;font-weight:normal;letter-spacing:0px;">0,00</div>
<div class="t" style="right:837px;top:398.69px;font-size:11px;line-height:11px;color:#000;font-weight:normal;letter-spacing:0px;">251,69</div>
<div class="t" style="right:637px;top:398.69px;font-size:11px;line-height:11px;color:#000;font-weight:normal;letter-spacing:0px;">0,00</div>
<div class="t" style="left:1291.3px;top:398.69px;font-size:11px;line-height:11px;color:#000;font-weight:normal;letter-spacing:0px;">600.20</div>
<div class="t" style="right:437px;top:398.69px;font-size:11px;line-height:11px;color:#000;font-weight:normal;letter-spacing:0px;">0,00</div>
<div class="t" style="left:1491.3px;top:398.69px;font-size:11px;line-height:11px;color:#000;font-weight:normal;letter-spacing:0px;">391.20</div>
<div class="t" style="right:137px;top:398.69px;font-size:11px;line-height:11px;color:#000;font-weight:normal;letter-spacing:0px;">0,00</div>
<div class="t" style="left:1791.3px;top:398.69px;font-size:11px;line-height:11px;color:#000;font-weight:normal;letter-spacing:0px;">600.18</div>
<div class="t" style="left:-272px;width:600px;text-align:center;top:420.69px;font-size:11px;line-height:11px;color:#000;font-weight:normal;letter-spacing:0px;">8</div>
<div class="t" style="left:48px;top:420.69px;font-size:11px;line-height:11px;color:#000;font-weight:normal;letter-spacing:-0.3px;">E-Fatura</div>
<div class="t" style="left:148px;top:420.69px;font-size:11px;line-height:11px;color:#000;font-weight:normal;letter-spacing:-0.3px;">Istisna</div>
<div class="t" style="left:248px;top:420.69px;font-size:11px;line-height:11px;color:#000;font-weight:normal;letter-spacing:0.08px;">EF12024001115...</div>
<div class="t" style="left:352.3px;top:420.69px;font-size:11px;line-height:11px;color:#000;font-weight:normal;letter-spacing:0px;">6.03.2024</div>
<div class="t" style="left:418px;top:420.69px;font-size:11px;line-height:11px;color:#000;font-weight:normal;letter-spacing:-0.3px;">Akyüz Gıda</div>
<div class="t" style="left:512.3px;top:420.69px;font-size:11px;line-height:11px;color:#000;font-weight:normal;letter-spacing:0px;">120.09</div>
<div class="t" style="left:690px;top:420.69px;font-size:11px;line-height:11px;color:#000;font-weight:normal;letter-spacing:-0.3px;">Kredi Kartı</div>
<div class="t" style="right:1037px;top:420.69px;font-size:11px;line-height:11px;color:#000;font-weight:normal;letter-spacing:0px;">675,00</div>
<div class="t" style="right:937px;top:420.69px;font-size:11px;line-height:11px;color:#000;font-weight:normal;letter-spacing:0px;">0,00</div>
<div class="t" style="right:837px;top:420.69px;font-size:11px;line-height:11px;color:#000;font-weight:normal;letter-spacing:0px;">675,00</div>
<div class="t" style="right:637px;top:420.69px;font-size:11px;line-height:11px;color:#000;font-weight:normal;letter-spacing:0px;">0,00</div>
<div class="t" style="left:1291.3px;top:420.69px;font-size:11px;line-height:11px;color:#000;font-weight:normal;letter-spacing:0px;">600.20</div>
<div class="t" style="right:437px;top:420.69px;font-size:11px;line-height:11px;color:#000;font-weight:normal;letter-spacing:0px;">0,00</div>
<div class="t" style="left:1491.3px;top:420.69px;font-size:11px;line-height:11px;color:#000;font-weight:normal;letter-spacing:0px;">391.20</div>
<div class="t" style="right:137px;top:420.69px;font-size:11px;line-height:11px;color:#000;font-weight:normal;letter-spacing:0px;">0,00</div>
<div class="t" style="left:1791.3px;top:420.69px;font-size:11px;line-height:11px;color:#000;font-weight:normal;letter-spacing:0px;">600.18</div>
<div class="t" style="left:-272px;width:600px;text-align:center;top:442.69px;font-size:11px;line-height:11px;color:#000;font-weight:normal;letter-spacing:0px;">9</div>
<div class="t" style="left:48px;top:442.69px;font-size:11px;line-height:11px;color:#000;font-weight:normal;letter-spacing:-0.3px;">E-Fatura</div>
<div class="t" style="left:148px;top:442.69px;font-size:11px;line-height:11px;color:#000;font-weight:normal;letter-spacing:-0.3px;">Istisna</div>
<div class="t" style="left:248px;top:442.69px;font-size:11px;line-height:11px;color:#000;font-weight:normal;letter-spacing:0.08px;">EF12024001115...</div>
<div class="t" style="left:352.3px;top:442.69px;font-size:11px;line-height:11px;color:#000;font-weight:normal;letter-spacing:0px;">6.03.2024</div>
<div class="t" style="left:418px;top:442.69px;font-size:11px;line-height:11px;color:#000;font-weight:normal;letter-spacing:-0.3px;">Bütüner Pazarl...</div>
<div class="t" style="left:512.3px;top:442.69px;font-size:11px;line-height:11px;color:#000;font-weight:normal;letter-spacing:0px;">120.10</div>
<div class="t" style="left:690px;top:442.69px;font-size:11px;line-height:11px;color:#000;font-weight:normal;letter-spacing:-0.3px;">Kredi Kartı</div>
<div class="t" style="right:1037px;top:442.69px;font-size:11px;line-height:11px;color:#000;font-weight:normal;letter-spacing:0px;">150,00</div>
<div class="t" style="right:937px;top:442.69px;font-size:11px;line-height:11px;color:#000;font-weight:normal;letter-spacing:0px;">0,00</div>
<div class="t" style="right:837px;top:442.69px;font-size:11px;line-height:11px;color:#000;font-weight:normal;letter-spacing:0px;">150,00</div>
<div class="t" style="right:637px;top:442.69px;font-size:11px;line-height:11px;color:#000;font-weight:normal;letter-spacing:0px;">0,00</div>
<div class="t" style="left:1291.3px;top:442.69px;font-size:11px;line-height:11px;color:#000;font-weight:normal;letter-spacing:0px;">600.20</div>
<div class="t" style="right:437px;top:442.69px;font-size:11px;line-height:11px;color:#000;font-weight:normal;letter-spacing:0px;">0,00</div>
<div class="t" style="left:1491.3px;top:442.69px;font-size:11px;line-height:11px;color:#000;font-weight:normal;letter-spacing:0px;">391.20</div>
<div class="t" style="right:137px;top:442.69px;font-size:11px;line-height:11px;color:#000;font-weight:normal;letter-spacing:0px;">0,00</div>
<div class="t" style="left:1791.3px;top:442.69px;font-size:11px;line-height:11px;color:#000;font-weight:normal;letter-spacing:0px;">600.18</div>
<div class="t" style="left:-272px;width:600px;text-align:center;top:464.69px;font-size:11px;line-height:11px;color:#000;font-weight:normal;letter-spacing:0px;">10</div>
<div class="t" style="left:48px;top:464.69px;font-size:11px;line-height:11px;color:#000;font-weight:normal;letter-spacing:-0.3px;">E-Fatura</div>
<div class="t" style="left:148px;top:464.69px;font-size:11px;line-height:11px;color:#000;font-weight:normal;letter-spacing:-0.3px;">Istisna</div>
<div class="t" style="left:248px;top:464.69px;font-size:11px;line-height:11px;color:#000;font-weight:normal;letter-spacing:0.08px;">EF12024001115...</div>
<div class="t" style="left:352.3px;top:464.69px;font-size:11px;line-height:11px;color:#000;font-weight:normal;letter-spacing:0px;">6.03.2024</div>
<div class="t" style="left:418px;top:464.69px;font-size:11px;line-height:11px;color:#000;font-weight:normal;letter-spacing:-0.3px;">Polat Gıda</div>
<div class="t" style="left:512.3px;top:464.69px;font-size:11px;line-height:11px;color:#000;font-weight:normal;letter-spacing:0px;">120.11</div>
<div class="t" style="left:690px;top:464.69px;font-size:11px;line-height:11px;color:#000;font-weight:normal;letter-spacing:-0.3px;">Nakit</div>
<div class="t" style="right:637px;top:464.69px;font-size:11px;line-height:11px;color:#000;font-weight:normal;letter-spacing:0px;">0,00</div>
<div class="t" style="left:1291.3px;top:464.69px;font-size:11px;line-height:11px;color:#000;font-weight:normal;letter-spacing:0px;">600.20</div>
<div class="t" style="right:437px;top:464.69px;font-size:11px;line-height:11px;color:#000;font-weight:normal;letter-spacing:0px;">0,00</div>
<div class="t" style="left:1491.3px;top:464.69px;font-size:11px;line-height:11px;color:#000;font-weight:normal;letter-spacing:0px;">391.20</div>
<div class="t" style="right:137px;top:464.69px;font-size:11px;line-height:11px;color:#000;font-weight:normal;letter-spacing:0px;">0,00</div>
<div class="t" style="left:1791.3px;top:464.69px;font-size:11px;line-height:11px;color:#000;font-weight:normal;letter-spacing:0px;">600.18</div>
<div class="t" style="left:-272px;width:600px;text-align:center;top:486.69px;font-size:11px;line-height:11px;color:#000;font-weight:normal;letter-spacing:0px;">11</div>
<div class="t" style="left:48px;top:486.69px;font-size:11px;line-height:11px;color:#000;font-weight:normal;letter-spacing:-0.3px;">E-Fatura</div>
<div class="t" style="left:148px;top:486.69px;font-size:11px;line-height:11px;color:#000;font-weight:normal;letter-spacing:-0.3px;">Satış</div>
<div class="t" style="left:248px;top:486.69px;font-size:11px;line-height:11px;color:#000;font-weight:normal;letter-spacing:0.08px;">EF12024001115...</div>
<div class="t" style="left:352.3px;top:486.69px;font-size:11px;line-height:11px;color:#000;font-weight:normal;letter-spacing:0px;">6.03.2024</div>
<div class="t" style="left:418px;top:486.69px;font-size:11px;line-height:11px;color:#000;font-weight:normal;letter-spacing:-0.3px;">Deniz Plastik</div>
<div class="t" style="left:512.3px;top:486.69px;font-size:11px;line-height:11px;color:#000;font-weight:normal;letter-spacing:0px;">120.12</div>
<div class="t" style="left:690px;top:486.69px;font-size:11px;line-height:11px;color:#000;font-weight:normal;letter-spacing:-0.3px;">Cari</div>
<div class="t" style="right:637px;top:486.69px;font-size:11px;line-height:11px;color:#000;font-weight:normal;letter-spacing:0px;">3.416,67</div>
<div class="t" style="left:1291.3px;top:486.69px;font-size:11px;line-height:11px;color:#000;font-weight:normal;letter-spacing:0px;">600.20</div>
<div class="t" style="right:437px;top:486.69px;font-size:11px;line-height:11px;color:#000;font-weight:normal;letter-spacing:0px;">683,33</div>
<div class="t" style="left:1491.3px;top:486.69px;font-size:11px;line-height:11px;color:#000;font-weight:normal;letter-spacing:0px;">391.20</div>
<div class="t" style="right:137px;top:486.69px;font-size:11px;line-height:11px;color:#000;font-weight:normal;letter-spacing:0px;">0,00</div>
<div class="t" style="left:1791.3px;top:486.69px;font-size:11px;line-height:11px;color:#000;font-weight:normal;letter-spacing:0px;">600.18</div>
<div class="t" style="left:-272px;width:600px;text-align:center;top:508.69px;font-size:11px;line-height:11px;color:#000;font-weight:normal;letter-spacing:0px;">12</div>
<div class="t" style="left:48px;top:508.69px;font-size:11px;line-height:11px;color:#000;font-weight:normal;letter-spacing:-0.3px;">E-Arşiv Fatura</div>
<div class="t" style="left:148px;top:508.69px;font-size:11px;line-height:11px;color:#000;font-weight:normal;letter-spacing:-0.3px;">Satış</div>
<div class="t" style="left:248px;top:508.69px;font-size:11px;line-height:11px;color:#000;font-weight:normal;letter-spacing:0.08px;">EA12024001115...</div>
<div class="t" style="left:352.3px;top:508.69px;font-size:11px;line-height:11px;color:#000;font-weight:normal;letter-spacing:0px;">6.03.2024</div>
<div class="t" style="left:418px;top:508.69px;font-size:11px;line-height:11px;color:#000;font-weight:normal;letter-spacing:-0.3px;">Kırlangıç Kitap ...</div>
<div class="t" style="left:512.3px;top:508.69px;font-size:11px;line-height:11px;color:#000;font-weight:normal;letter-spacing:0px;">120.13</div>
<div class="t" style="left:690px;top:508.69px;font-size:11px;line-height:11px;color:#000;font-weight:normal;letter-spacing:-0.3px;">Nakit</div>
<div class="t" style="right:637px;top:508.69px;font-size:11px;line-height:11px;color:#000;font-weight:normal;letter-spacing:0px;">313,14</div>
<div class="t" style="left:1291.3px;top:508.69px;font-size:11px;line-height:11px;color:#000;font-weight:normal;letter-spacing:0px;">600.20</div>
<div class="t" style="right:437px;top:508.69px;font-size:11px;line-height:11px;color:#000;font-weight:normal;letter-spacing:0px;">62,63</div>
<div class="t" style="left:1491.3px;top:508.69px;font-size:11px;line-height:11px;color:#000;font-weight:normal;letter-spacing:0px;">391.20</div>
<div class="t" style="right:137px;top:508.69px;font-size:11px;line-height:11px;color:#000;font-weight:normal;letter-spacing:0px;">0,00</div>
<div class="t" style="left:1791.3px;top:508.69px;font-size:11px;line-height:11px;color:#000;font-weight:normal;letter-spacing:0px;">600.18</div>
<div class="t" style="left:-272px;width:600px;text-align:center;top:530.69px;font-size:11px;line-height:11px;color:#000;font-weight:normal;letter-spacing:0px;">13</div>
<div class="t" style="left:48px;top:530.69px;font-size:11px;line-height:11px;color:#000;font-weight:normal;letter-spacing:-0.3px;">E-Fatura</div>
<div class="t" style="left:148px;top:530.69px;font-size:11px;line-height:11px;color:#000;font-weight:normal;letter-spacing:-0.3px;">Satış</div>
<div class="t" style="left:248px;top:530.69px;font-size:11px;line-height:11px;color:#000;font-weight:normal;letter-spacing:0.08px;">EF12024001115...</div>
<div class="t" style="left:352.3px;top:530.69px;font-size:11px;line-height:11px;color:#000;font-weight:normal;letter-spacing:0px;">6.03.2024</div>
<div class="t" style="left:418px;top:530.69px;font-size:11px;line-height:11px;color:#000;font-weight:normal;letter-spacing:-0.3px;">Durgun İnşaat ...</div>
<div class="t" style="left:512.3px;top:530.69px;font-size:11px;line-height:11px;color:#000;font-weight:normal;letter-spacing:0px;">120.14</div>
<div class="t" style="left:690px;top:530.69px;font-size:11px;line-height:11px;color:#000;font-weight:normal;letter-spacing:-0.3px;">Nakit</div>
<div class="t" style="right:637px;top:530.69px;font-size:11px;line-height:11px;color:#000;font-weight:normal;letter-spacing:0px;">901,67</div>
<div class="t" style="left:1291.3px;top:530.69px;font-size:11px;line-height:11px;color:#000;font-weight:normal;letter-spacing:0px;">600.20</div>
<div class="t" style="right:437px;top:530.69px;font-size:11px;line-height:11px;color:#000;font-weight:normal;letter-spacing:0px;">180,33</div>
<div class="t" style="left:1491.3px;top:530.69px;font-size:11px;line-height:11px;color:#000;font-weight:normal;letter-spacing:0px;">391.20</div>
<div class="t" style="right:137px;top:530.69px;font-size:11px;line-height:11px;color:#000;font-weight:normal;letter-spacing:0px;">0,00</div>
<div class="t" style="left:1791.3px;top:530.69px;font-size:11px;line-height:11px;color:#000;font-weight:normal;letter-spacing:0px;">600.18</div>
<div class="t" style="left:-272px;width:600px;text-align:center;top:552.69px;font-size:11px;line-height:11px;color:#000;font-weight:normal;letter-spacing:0px;">14</div>
<div class="t" style="left:48px;top:552.69px;font-size:11px;line-height:11px;color:#000;font-weight:normal;letter-spacing:-0.3px;">E-Fatura</div>
<div class="t" style="left:148px;top:552.69px;font-size:11px;line-height:11px;color:#000;font-weight:normal;letter-spacing:-0.3px;">Satış</div>
<div class="t" style="left:248px;top:552.69px;font-size:11px;line-height:11px;color:#000;font-weight:normal;letter-spacing:0.08px;">EF12024001115...</div>
<div class="t" style="left:352.3px;top:552.69px;font-size:11px;line-height:11px;color:#000;font-weight:normal;letter-spacing:0px;">7.03.2024</div>
<div class="t" style="left:418px;top:552.69px;font-size:11px;line-height:11px;color:#000;font-weight:normal;letter-spacing:-0.3px;">Kaptan Market</div>
<div class="t" style="left:512.3px;top:552.69px;font-size:11px;line-height:11px;color:#000;font-weight:normal;letter-spacing:0px;">102.01</div>
<div class="t" style="left:690px;top:552.69px;font-size:11px;line-height:11px;color:#000;font-weight:normal;letter-spacing:-0.3px;">Kredi Kartı</div>
<div class="t" style="right:637px;top:552.69px;font-size:11px;line-height:11px;color:#000;font-weight:normal;letter-spacing:0px;">51.478,63</div>
<div class="t" style="left:1291.3px;top:552.69px;font-size:11px;line-height:11px;color:#000;font-weight:normal;letter-spacing:0px;">600.20</div>
<div class="t" style="right:437px;top:552.69px;font-size:11px;line-height:11px;color:#000;font-weight:normal;letter-spacing:0px;">10.295,73</div>
<div class="t" style="left:1491.3px;top:552.69px;font-size:11px;line-height:11px;color:#000;font-weight:normal;letter-spacing:0px;">391.20</div>
<div class="t" style="right:137px;top:552.69px;font-size:11px;line-height:11px;color:#000;font-weight:normal;letter-spacing:0px;">0,00</div>
<div class="t" style="left:1791.3px;top:552.69px;font-size:11px;line-height:11px;color:#000;font-weight:normal;letter-spacing:0px;">600.18</div>
<div class="t" style="left:-272px;width:600px;text-align:center;top:574.69px;font-size:11px;line-height:11px;color:#000;font-weight:normal;letter-spacing:0px;">15</div>
<svg style="left:13px;top:577px" width="6" height="6" viewBox="0 0 6 6"><circle cx="3" cy="3" r="2.4" fill="#555"/></svg>
<svg style="left:11px;top:267px" width="6" height="10" viewBox="0 0 6 10"><path d="M0 0L5 5L0 10Z" fill="#333"/></svg>
<div class="r" style="left:5px;top:590px;width:1910px;height:1px;background:#a0a0a0"></div>
<div class="r" style="left:5px;top:951px;width:1910px;height:17px;background:#f0f0f0;border-top:1px solid #fff"></div>
<div class="r" style="left:22px;top:952px;width:724px;height:15px;background:#cdcdcd"></div>
<svg style="left:10px;top:955px" width="6" height="9" viewBox="0 0 6 9"><path d="M5 0.8L1.3 4.5L5 8.2" fill="none" stroke="#606060" stroke-width="2.2"/></svg>
<svg style="left:1903px;top:955px" width="6" height="9" viewBox="0 0 6 9"><path d="M1 0.8L4.7 4.5L1 8.2" fill="none" stroke="#606060" stroke-width="2.2"/></svg>
<div class="r" style="left:794px;top:458px;width:329px;height:121px;background:#dadada"></div>
<div class="r" style="left:788px;top:579px;width:335px;height:11px;background:#fff"></div>
<div class="r" style="left:1103px;top:579px;width:1px;height:11px;background:#a0a0a0"></div>
<div class="r" style="left:797px;top:512px;width:323px;height:24px;background:#06b025;border:1px solid #bcbcbc"></div>
<div class="r" style="left:871px;top:469px;width:190px;height:156px;border:3px solid #d4367c;background:#fff;box-shadow:0 2px 5px rgba(0,0,0,0.32), 0 0 16px rgba(0,0,0,0.2)">
<div class="r" style="left:0;top:108px;width:184px;height:42px;background:#f0f0f0"></div>
</div>
<div class="t" style="left:884.5px;top:479.84px;font-size:12px;line-height:12px;color:#000;font-weight:normal;letter-spacing:0px;">Bilgi Mesajı</div>
<svg style="left:1038px;top:479px" width="11" height="11" viewBox="0 0 11 11"><path d="M0.5 0.5L10.5 10.5M10.5 0.5L0.5 10.5" stroke="#111" stroke-width="1.1"/></svg>
<svg style="left:897px;top:525px" width="32" height="32" viewBox="0 0 32 32"><circle cx="15.8" cy="15.5" r="14.8" fill="#0078d7" stroke="#0b5a9c" stroke-width="0.8"/><rect x="15" y="10.2" width="2" height="15" fill="#fff"/><rect x="15" y="6" width="2" height="2" fill="#fff"/></svg>
<div class="t" style="left:938.5px;top:536.69px;font-size:11px;line-height:11px;color:#000;font-weight:normal;letter-spacing:0px;">Dosya Hazırlandı.</div>
<div class="r" style="left:960px;top:591px;width:81px;height:22px;background:#e1e1e1;border:2px solid #0078d7"></div>
<div class="t" style="left:700.5px;width:600px;text-align:center;top:597.69px;font-size:11px;line-height:11px;color:#000;font-weight:normal;letter-spacing:0px;">Tamam</div>
<div class="r" style="left:0px;top:991px;width:1500px;height:1px;background:#dcdcdc"></div>
<div class="r" style="left:0px;top:1015px;width:1920px;height:1px;background:#a8a8a8"></div>
<div class="r" style="left:3px;top:994px;width:88px;height:18px;border-top:1px solid #a8a8a8;border-left:1px solid #a8a8a8;border-bottom:1px solid #fff;border-right:1px solid #fff;"></div>
<div class="t" style="left:7px;top:998.60px;font-size:11.1px;line-height:11.1px;color:#000;font-weight:normal;letter-spacing:0px;">Fatura Sayısı:14</div>
<div class="r" style="left:93px;top:994px;width:72px;height:18px;border-top:1px solid #a8a8a8;border-left:1px solid #a8a8a8;border-bottom:1px solid #fff;border-right:1px solid #fff;box-shadow:1px 1px 0 #008000;background:#008000;"></div>
<div class="t" style="left:101px;top:998.60px;font-size:11.1px;line-height:11.1px;color:#fff;font-weight:normal;letter-spacing:0px;">Bakiye:0,00</div>
<div class="r" style="left:166px;top:994px;width:162px;height:18px;border-top:1px solid #a8a8a8;border-left:1px solid #a8a8a8;border-bottom:1px solid #fff;border-right:1px solid #fff;"></div>
<div class="t" style="left:173px;top:998.60px;font-size:11.1px;line-height:11.1px;color:#000;font-weight:normal;letter-spacing:0px;">Kdv Hariç Toplam:125.130,80</div>
<div class="r" style="left:329px;top:994px;width:125px;height:18px;border-top:1px solid #a8a8a8;border-left:1px solid #a8a8a8;border-bottom:1px solid #fff;border-right:1px solid #fff;"></div>
<div class="t" style="left:337.5px;top:998.60px;font-size:11.1px;line-height:11.1px;color:#000;font-weight:normal;letter-spacing:0px;">Toplam Kdv:24.780,82</div>
<div class="r" style="left:456px;top:994px;width:107px;height:18px;border-top:1px solid #a8a8a8;border-left:1px solid #a8a8a8;border-bottom:1px solid #fff;border-right:1px solid #fff;"></div>
<div class="t" style="left:464px;top:998.60px;font-size:11.1px;line-height:11.1px;color:#000;font-weight:normal;letter-spacing:0px;">Diğer Vergiler:0,00</div>
<div class="r" style="left:564px;top:994px;width:142px;height:18px;border-top:1px solid #a8a8a8;border-left:1px solid #a8a8a8;border-bottom:1px solid #fff;border-right:1px solid #fff;"></div>
<div class="t" style="left:572.5px;top:998.60px;font-size:11.1px;line-height:11.1px;color:#000;font-weight:normal;letter-spacing:0px;">Genel Toplam:149.911,62</div>
<div class="r" style="left:707px;top:994px;width:1px;height:18px;background:#a8a8a8"></div>
<div class="r" style="left:711px;top:994px;width:1px;height:18px;background:#a8a8a8"></div>
<div class="r" style="left:1664px;top:985px;width:128px;height:21px;background:#e1e1e1;border:1px solid #adadad"></div>
<div class="r" style="left:1667px;top:988px;width:122px;height:16px;background:#008000"></div>
<div class="t" style="left:1428px;width:600px;text-align:center;top:990.59px;font-size:12.3px;line-height:12.3px;color:#fff;font-weight:bold;letter-spacing:0px;">DIŞARI AKTAR - F2</div>
<div class="r" style="left:1800px;top:985px;width:115px;height:21px;background:#e1e1e1;border:1px solid #adadad"></div>
<div class="r" style="left:1803px;top:988px;width:109px;height:16px;background:#d65c5c"></div>
<div class="t" style="left:1557.5px;width:600px;text-align:center;top:989.59px;font-size:12.3px;line-height:12.3px;color:#fff;font-weight:bold;letter-spacing:0px;">VAZGEÇ - ESC</div>
<div class="r" style="left:1px;top:1019px;width:46px;height:18px;border:1px solid #dcdcdc"></div>
<div class="t" style="left:6px;top:1024.03px;font-size:10.6px;line-height:10.6px;color:#000;font-weight:normal;letter-spacing:0px;">DEBUG</div>
<div class="r" style="left:49px;top:1019px;width:96px;height:18px;border:1px solid #dcdcdc"></div>
<div class="t" style="left:54px;top:1023.69px;font-size:11px;line-height:11px;color:#000;font-weight:normal;letter-spacing:0px;">Versiyon : 5.1.0.0</div>
</body></html>
